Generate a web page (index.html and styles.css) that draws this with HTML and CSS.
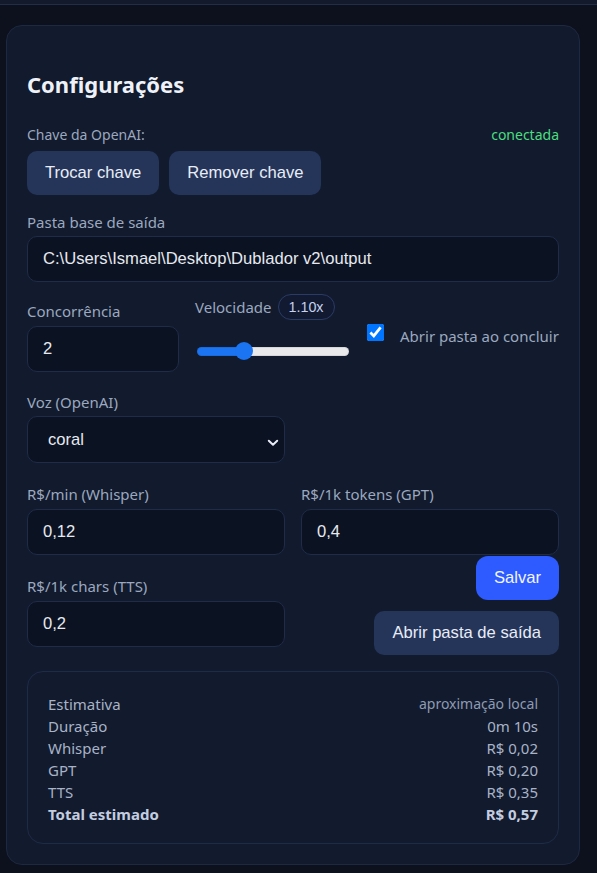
FILE: index.html
```html
<!DOCTYPE html>
<html lang="pt-BR">
<head>
<meta charset="utf-8">
<title>Configurações</title>
<link rel="stylesheet" href="styles.css">
</head>
<body>
<div class="topbar"></div>
<main class="wrap">
  <section class="card">
    <h2 class="title">Configurações</h2>

    <div class="key-head">
      <span class="label">Chave da OpenAI:</span>
      <span class="ok">conectada</span>
    </div>
    <div class="key-btns">
      <button class="btn">Trocar chave</button>
      <button class="btn">Remover chave</button>
    </div>

    <div class="field field-path">
      <span class="label">Pasta base de saída</span>
      <input class="input" type="text" value="C:\Users\Ismael\Desktop\Dublador v2\output">
    </div>

    <div class="opts">
      <div class="col-conc">
        <span class="label">Concorrência</span>
        <input class="input" type="text" value="2">
      </div>
      <div class="col-speed">
        <div class="speed-head">
          <span class="label">Velocidade</span>
          <span class="badge">1.10x</span>
        </div>
        <input class="range" type="range" min="0.75" max="2" step="0.05" value="1.1" style="--p: 30%">
      </div>
      <label class="col-check">
        <input class="check" type="checkbox" checked>
        <span class="check-label">Abrir pasta ao concluir</span>
      </label>
    </div>

    <div class="field field-voice">
      <span class="label">Voz (OpenAI)</span>
      <div class="select-wrap">
        <select class="input select">
          <option>coral</option>
        </select>
        <svg class="chev" width="12" height="8" viewBox="0 0 12 8"><path d="M1.8 1.8 L6 5.8 L10.2 1.8" fill="none" stroke="#e6ebf5" stroke-width="2" stroke-linecap="round" stroke-linejoin="round"/></svg>
      </div>
    </div>

    <div class="prices">
      <div class="field">
        <span class="label">R$/min (Whisper)</span>
        <input class="input" type="text" value="0,12">
      </div>
      <div class="field">
        <span class="label">R$/1k tokens (GPT)</span>
        <input class="input" type="text" value="0,4">
      </div>
      <div class="field field-tts">
        <span class="label">R$/1k chars (TTS)</span>
        <input class="input" type="text" value="0,2">
      </div>
      <div class="actions">
        <button class="btn btn-primary">Salvar</button>
        <button class="btn">Abrir pasta de saída</button>
      </div>
    </div>

    <div class="estimate">
      <div class="est-row"><span>Estimativa</span><span class="muted">aproximação local</span></div>
      <div class="est-row"><span>Duração</span><span>0m 10s</span></div>
      <div class="est-row"><span>Whisper</span><span>R$ 0,02</span></div>
      <div class="est-row"><span>GPT</span><span>R$ 0,20</span></div>
      <div class="est-row"><span>TTS</span><span>R$ 0,35</span></div>
      <div class="est-row total"><span>Total estimado</span><span>R$ 0,57</span></div>
    </div>
  </section>
</main>
</body>
</html>
```

FILE: styles.css
```css
* { box-sizing: border-box; }

body {
  margin: 0;
  background: #0c111d;
  font-family: "Noto Sans", "Open Sans", sans-serif;
}

.topbar {
  height: 5px;
  background: #121a2b;
  border-bottom: 1px solid #222d47;
}

.wrap {
  padding: 20px 17px 0 6px;
}

.card {
  background: #121a2d;
  border: 1px solid #1d2841;
  border-radius: 16px;
  padding: 20px;
}

.title {
  margin: 24px 0 27px;
  font-size: 22px;
  line-height: 28px;
  font-weight: 700;
  color: #eef2f8;
}

.label {
  display: block;
  font-size: 15px;
  line-height: 20px;
  color: #9ba8bf;
}

.key-head {
  display: flex;
  justify-content: space-between;
}

.key-head .label {
  font-size: 14px;
}

.ok {
  font-size: 14px;
  line-height: 20px;
  color: #4ade80;
}

.key-btns {
  display: flex;
  gap: 10px;
  margin-top: 6px;
}

.btn {
  height: 44px;
  padding: 0 18px;
  border: 0;
  border-radius: 10px;
  background: #25355a;
  color: #e8edf7;
  font: 16.6px "Liberation Sans", Arial, sans-serif;
}

.btn-primary {
  background: #2d5bff;
  color: #f3f6ff;
  border-radius: 12px;
}

.field-path {
  margin-top: 17px;
}

.input {
  display: block;
  width: 100%;
  height: 46px;
  margin-top: 4px;
  padding: 0 15px;
  background: #0b1222;
  border: 1px solid #1f2b49;
  border-radius: 10px;
  color: #e6e9ef;
  font: 16.6px "Liberation Sans", Arial, sans-serif;
  outline: none;
}

.opts {
  display: flex;
  align-items: flex-start;
  margin-top: 12px;
}

.col-conc {
  width: 152px;
  margin-top: 7px;
}

.col-conc .input {
  margin-top: 5px;
}

.col-speed {
  width: 154px;
  margin-left: 16px;
}

.speed-head {
  display: flex;
  align-items: center;
  gap: 6px;
  height: 26px;
}

.badge {
  display: flex;
  align-items: center;
  height: 26px;
  padding: 0 10px;
  border: 1px solid #2a3b66;
  border-radius: 13px;
  background: #111a30;
  color: #c5d1ee;
  font: 14.3px "Liberation Sans", Arial, sans-serif;
}

.range {
  -webkit-appearance: none;
  appearance: none;
  display: block;
  width: 152px;
  height: 18px;
  margin: 22px 0 0 2px;
  background: transparent;
}

.range::-webkit-slider-runnable-track {
  height: 9px;
  border-radius: 5px;
  background: linear-gradient(to right, #1b74f2 var(--p), #e9e9eb var(--p));
  box-shadow: inset 0 0 0 1px rgba(0, 0, 0, 0.08);
}

.range::-webkit-slider-thumb {
  -webkit-appearance: none;
  appearance: none;
  width: 18px;
  height: 18px;
  margin-top: -4.5px;
  border-radius: 50%;
  background: #1b74f2;
  border: 0;
}

.col-check {
  display: flex;
  align-items: flex-start;
  gap: 16px;
  margin: 30px 0 0 18px;
}

.check {
  width: 17px;
  height: 17px;
  margin: 0;
}

.check-label {
  margin-top: 2px;
  font-size: 15px;
  line-height: 20px;
  color: #9ba8bf;
}

.field-voice {
  margin-top: 20px;
  width: 258px;
}

.select-wrap {
  position: relative;
}

.select {
  appearance: none;
  height: 47px;
  padding: 0 40px 0 20px;
}

.chev {
  position: absolute;
  right: 6px;
  top: 23px;
  pointer-events: none;
}

.prices {
  display: grid;
  grid-template-columns: 1fr 1fr;
  column-gap: 16px;
  row-gap: 1px;
  margin-top: 21px;
}

.prices .input {
  margin-top: 5px;
}

.field-tts {
  padding-top: 20px;
}

.actions {
  display: flex;
  flex-direction: column;
  align-items: flex-end;
  gap: 11px;
}

.estimate {
  margin-top: 16px;
  border: 1px solid #1e2a47;
  border-radius: 16px;
  padding: 21px 20px 18px;
}

.est-row {
  display: flex;
  justify-content: space-between;
  font-size: 15px;
  line-height: 22px;
  color: #a8b3c7;
}

.est-row .muted {
  font-size: 14px;
  color: #8d9ab3;
}

.est-row.total {
  font-weight: 700;
  color: #c3cde0;
}
```
